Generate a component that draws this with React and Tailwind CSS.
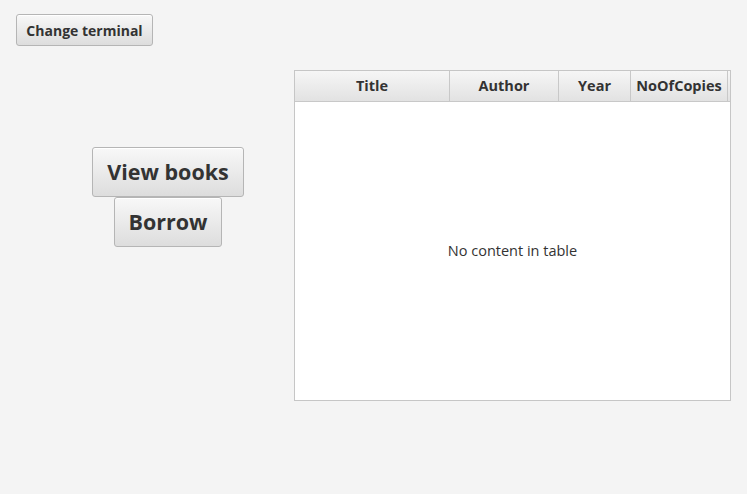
const btn =
    "border border-[#b5b5b5] rounded-[3px] bg-gradient-to-b from-[#f8f8f8] to-[#dddddd] text-[#333333] font-bold shadow-[inset_0_1px_0_#ffffff]";

function HeaderCell({ children, className }) {
    return (
        <div
            className={
                "flex items-center justify-center border-r border-[#c8c8c8] text-[14.5px] font-bold text-[#333333] " +
                className
            }
        >
            {children}
        </div>
    );
}

export default function App() {
    return (
        <div
            className="w-[747px] h-[494px] bg-[#f4f4f4] overflow-hidden"
            style={{ fontFamily: '"Open Sans", sans-serif' }}
        >
            <div className="pt-[14px] pl-[16px]">
                <button className={btn + " w-[137px] h-[32px] text-[14px]"}>
                    Change terminal
                </button>
            </div>
            <div className="flex mt-[24px]">
                <div className="w-[294px] pl-[42px] pt-[77px] flex flex-col items-center">
                    <button className={btn + " w-[152px] h-[50px] text-[21.5px]"}>
                        View books
                    </button>
                    <button className={btn + " w-[108px] h-[50px] text-[21.5px]"}>
                        Borrow
                    </button>
                </div>
                <div className="w-[437px] h-[331px] border border-[#c6c6c6] bg-white flex flex-col">
                    <div className="flex h-[31px] border-b border-[#c8c8c8] bg-gradient-to-b from-[#f6f6f6] to-[#e2e2e2]">
                        <HeaderCell className="w-[155px]">Title</HeaderCell>
                        <HeaderCell className="w-[109px]">Author</HeaderCell>
                        <HeaderCell className="w-[72px]">Year</HeaderCell>
                        <HeaderCell className="w-[97px]">NoOfCopies</HeaderCell>
                        <div className="flex-1" />
                    </div>
                    <div className="flex-1 flex items-center justify-center text-[14.5px] text-[#333333]">
                        No content in table
                    </div>
                </div>
            </div>
        </div>
    );
}
